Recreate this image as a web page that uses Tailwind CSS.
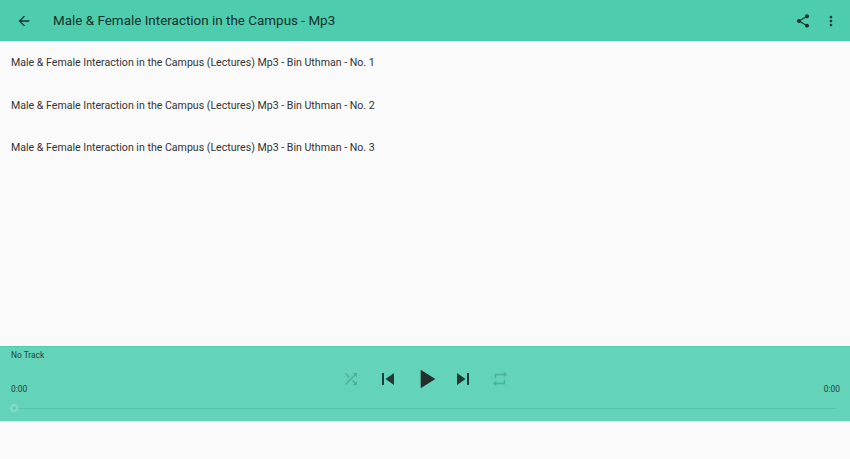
<!doctype html>
<html>
<head>
<meta charset="utf-8">
<script src="https://cdn.jsdelivr.net/npm/@tailwindcss/browser@4"></script>
</head>
<body class="m-0 w-[850px] h-[459px] overflow-hidden bg-[#fafafa] font-[Roboto,sans-serif] flex flex-col">
  <header class="h-[41px] bg-[#4dcdae] flex items-center shrink-0">
    <button class="ml-[16px] w-[16px] h-[16px] flex items-center justify-center">
      <svg width="16" height="16" viewBox="0 0 24 24" fill="#16312b"><path d="M20 11H7.83l5.59-5.59L12 4l-8 8 8 8 1.41-1.41L7.83 13H20v-2z"/></svg>
    </button>
    <h1 class="ml-[21px] text-[13.45px] leading-[20px] text-[#16312b] font-normal flex-1">Male &amp; Female Interaction in the Campus - Mp3</h1>
    <svg class="mr-[12px]" width="16" height="16" viewBox="0 0 24 24" fill="#16312b"><path d="M18 16.08c-.76 0-1.44.3-1.96.77L8.91 12.7c.05-.23.09-.46.09-.7s-.04-.47-.09-.7l7.05-4.11c.54.5 1.25.81 2.04.81 1.66 0 3-1.34 3-3s-1.34-3-3-3-3 1.34-3 3c0 .24.04.47.09.7L8.04 9.81C7.5 9.31 6.79 9 6 9c-1.66 0-3 1.34-3 3s1.34 3 3 3c.79 0 1.5-.31 2.04-.81l7.12 4.16c-.05.21-.08.43-.08.65 0 1.61 1.31 2.92 2.92 2.92s2.92-1.31 2.92-2.92-1.31-2.92-2.92-2.92z"/></svg>
    <svg class="mr-[11px]" width="16" height="16" viewBox="0 0 24 24" fill="#16312b"><path d="M12 8c1.1 0 2-.9 2-2s-.9-2-2-2-2 .9-2 2 .9 2 2 2zm0 2c-1.1 0-2 .9-2 2s.9 2 2 2 2-.9 2-2-.9-2-2-2zm0 6c-1.1 0-2 .9-2 2s.9 2 2 2 2-.9 2-2-.9-2-2-2z"/></svg>
  </header>
  <main class="flex-1 pt-[1px]">
    <div class="h-[42.5px] pl-[11px] flex items-center text-[10.6px] text-[#333] leading-[14px]">Male &amp; Female Interaction in the Campus (Lectures) Mp3 - Bin Uthman - No. 1</div>
    <div class="h-[42.5px] pl-[11px] flex items-center text-[10.6px] text-[#333] leading-[14px]">Male &amp; Female Interaction in the Campus (Lectures) Mp3 - Bin Uthman - No. 2</div>
    <div class="h-[42.5px] pl-[11px] flex items-center text-[10.6px] text-[#333] leading-[14px]">Male &amp; Female Interaction in the Campus (Lectures) Mp3 - Bin Uthman - No. 3</div>
  </main>
  <section class="h-[75px] bg-[#63d3b9] border-t border-[#58c9ae] shrink-0 flex flex-col relative">
    <div class="pl-[11px] pt-[3px] text-[8.4px] leading-[11px] text-[#24423b]">No Track</div>
    <div class="h-[32px] mt-[2px] pl-[11px] pr-[10px] flex items-center justify-between">
      <span class="text-[8.4px] leading-[11px] text-[#24423b] self-end mb-[0.5px]">0:00</span>
      <div class="flex items-center">
        <svg class="mr-[16px]" width="18" height="18" viewBox="0 0 24 24" fill="#3f9986" opacity=".6"><path d="M10.59 9.17L5.41 4 4 5.41l5.17 5.17 1.42-1.41zM14.5 4l2.04 2.04L4 18.59 5.41 20 17.96 7.46 20 9.5V4h-5.5zm.33 9.41l-1.41 1.41 3.13 3.13L14.5 20H20v-5.5l-2.04 2.04-3.13-3.13z"/></svg>
        <svg class="mr-[10px]" width="24" height="24" viewBox="0 0 24 24" fill="#1f3a34"><path d="M6 6h2v12H6zm3.5 6l8.5 6V6z"/></svg>
        <svg class="mr-[9px]" width="32" height="32" viewBox="0 0 24 24" fill="#222f2c"><path d="M8 5v14l11-7z"/></svg>
        <svg class="mr-[16px]" width="24" height="24" viewBox="0 0 24 24" fill="#1f3a34"><path d="M6 18l8.5-6L6 6v12zM16 6v12h2V6h-2z"/></svg>
        <svg width="18" height="18" viewBox="0 0 24 24" fill="#3f9986" opacity=".6"><path d="M7 7h10v3l4-4-4-4v3H5v6h2V7zm10 10H7v-3l-4 4 4 4v-3h12v-6h-2v4z"/></svg>
      </div>
      <span class="text-[8.4px] leading-[11px] text-[#24423b] self-end mb-[0.5px]">0:00</span>
    </div>
    <div class="relative mx-[14px] mt-[8px] h-[10px] flex items-center">
      <div class="w-full h-px bg-[#58c4aa]"></div>
      <div class="absolute left-[-4px] top-[1px] w-[8px] h-[8px] rounded-full border-2 border-[#86dac6]"></div>
    </div>
  </section>
  <div class="h-[38px] bg-[#fafafa] shrink-0"></div>
</body>
</html>
